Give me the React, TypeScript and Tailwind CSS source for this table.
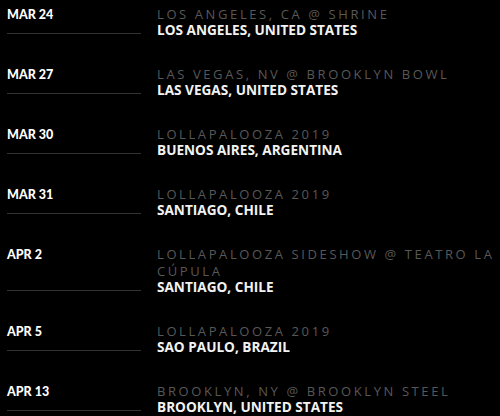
import React from 'react';

const shows = [
  { date: 'MAR 24', venue: 'LOS ANGELES, CA @ SHRINE', city: 'LOS ANGELES, UNITED STATES' },
  { date: 'MAR 27', venue: 'LAS VEGAS, NV @ BROOKLYN BOWL', city: 'LAS VEGAS, UNITED STATES' },
  { date: 'MAR 30', venue: 'LOLLAPALOOZA 2019', city: 'BUENOS AIRES, ARGENTINA' },
  { date: 'MAR 31', venue: 'LOLLAPALOOZA 2019', city: 'SANTIAGO, CHILE' },
  { date: 'APR 2', venue: 'LOLLAPALOOZA SIDESHOW @ TEATRO LA CÚPULA', city: 'SANTIAGO, CHILE' },
  { date: 'APR 5', venue: 'LOLLAPALOOZA 2019', city: 'SAO PAULO, BRAZIL' },
  { date: 'APR 13', venue: 'BROOKLYN, NY @ BROOKLYN STEEL', city: 'BROOKLYN, UNITED STATES' },
];

export default function App() {
  return (
    <div className="bg-black min-h-screen w-[500px] h-[416px] overflow-hidden pt-[6px]" style={{ fontFamily: '"Open Sans", sans-serif' }}>
      {shows.map((show) => (
        <div key={show.date} className="flex mb-[32px]">
          <div className="w-[134px] ml-[7px] shrink-0 border-b border-[#333333] pt-px">
            <p className="text-white text-[12.5px] leading-[16px]" style={{ fontFamily: 'Lato, sans-serif', fontWeight: 900 }}>
              {show.date}
            </p>
          </div>
          <div className="ml-[16px] w-[343px] -mb-[3px]">
            <p className="text-[#585858] text-[13px] leading-[17px] tracking-[0.2em]">{show.venue}</p>
            <p className="text-[#f2f2f2] text-[13.6px] leading-[14px] font-bold">{show.city}</p>
          </div>
        </div>
      ))}
    </div>
  );
}
